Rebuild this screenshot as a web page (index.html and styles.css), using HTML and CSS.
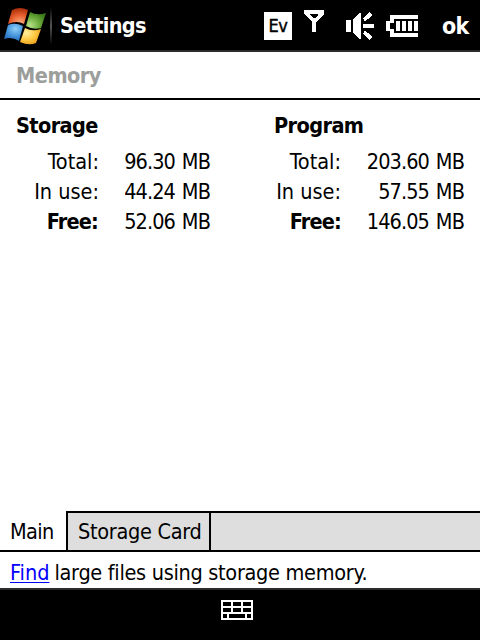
FILE: index.html
```html
<!DOCTYPE html>
<html lang="en">
<head>
    <meta charset="UTF-8">
    <meta name="viewport" content="width=device-width, initial-scale=1.0">
    <title>Settings</title>
    <link rel="stylesheet" href="styles.css">
</head>
<body>
    <header class="top-bar">
        <svg class="start-logo" width="44" height="40" viewBox="0 0 44 40">
            <defs>
                <radialGradient id="red" cx="0.6" cy="0.9" r="0.9"><stop offset="0" stop-color="#f8a878"/><stop offset="0.5" stop-color="#e86030"/><stop offset="1" stop-color="#a82c08"/></radialGradient>
                <radialGradient id="green" cx="0.2" cy="0.8" r="0.9"><stop offset="0" stop-color="#b8e088"/><stop offset="0.5" stop-color="#70b040"/><stop offset="1" stop-color="#387818"/></radialGradient>
                <radialGradient id="blue" cx="0.6" cy="0.3" r="0.9"><stop offset="0" stop-color="#90d0f8"/><stop offset="0.5" stop-color="#4090d8"/><stop offset="1" stop-color="#1858a8"/></radialGradient>
                <radialGradient id="yellow" cx="0.3" cy="0.3" r="0.9"><stop offset="0" stop-color="#fff0a0"/><stop offset="0.5" stop-color="#fcc840"/><stop offset="1" stop-color="#e08c10"/></radialGradient>
            </defs>
            <path fill="url(#red)" d="M9 3 Q17-1 25 3 L21 17 Q14 13 5 17Z"/>
            <path fill="url(#green)" d="M27 5 Q34 9 43 6 L38 21 Q30 23 23 19Z"/>
            <path fill="url(#blue)" d="M5 18 Q12 15 20 19 L16 34 Q9 29 1 32Z"/>
            <path fill="url(#yellow)" d="M22 21 Q29 25 38 22 L33 36 Q26 39 17 35Z"/>
        </svg>
        <span class="divider"></span>
        <h1>Settings</h1>
        <div class="status-icons">
            <span class="network">Ev</span>
            <svg class="signal" width="20" height="22" shape-rendering="crispEdges">
                <path fill="#fff" fill-rule="evenodd" d="M0 0H20V4L12 12V22H8V12L0 4Z M6 4V5L9 8H11L14 5V4Z"/>
            </svg>
            <svg class="speaker" width="28" height="28" shape-rendering="crispEdges">
                <path fill="#fff" d="M0 8H5V20H0Z M7 7L13 1H15V27H13L7 21Z M17 12H28V16H17Z"/>
                <path stroke="#fff" stroke-width="4" d="M18 8L25 1.500 M18 20L25 26.500"/>
            </svg>
            <svg class="battery" width="32" height="22" shape-rendering="crispEdges">
                <path fill="#fff" fill-rule="evenodd" d="M4 0H32V4H8V18H32V22H4V16H0V6H4Z M4 8V14H8V8Z"/>
                <path fill="#fff" d="M10 6h4v10h-4z M16 6h4v10h-4z M22 6h4v10h-4z M28 6h4v10h-4z"/>
            </svg>
        </div>
        <span class="ok-button">ok</span>
    </header>

    <h2 class="page-title">Memory</h2>

    <main>
        <section class="storage">
            <h3>Storage</h3>
            <dl>
                <dt>Total:</dt><dd>96.30 MB</dd>
                <dt>In use:</dt><dd>44.24 MB</dd>
                <dt class="free">Free:</dt><dd>52.06 MB</dd>
            </dl>
        </section>
        <section class="program">
            <h3>Program</h3>
            <dl>
                <dt>Total:</dt><dd>203.60 MB</dd>
                <dt>In use:</dt><dd>57.55 MB</dd>
                <dt class="free">Free:</dt><dd>146.05 MB</dd>
            </dl>
        </section>
    </main>

    <nav class="tabs">
        <div class="tab active">Main</div>
        <div class="tab card">Storage Card</div>
        <div class="tab-fill"></div>
    </nav>
    <p class="hint"><a href="#">Find</a><span>large files using storage memory.</span></p>

    <footer class="bottom-bar">
        <svg width="32" height="20" shape-rendering="crispEdges">
            <path fill="#fff" fill-rule="evenodd" d="M0 0H32V20H0Z M2 2v4h8v-4z M12 2v4h8v-4z M22 2v4h8v-4z M2 8v4h8v-4z M12 8v4h8v-4z M22 8v4h8v-4z M2 14v4h4v-4z M8 14v4h16v-4z M26 14v4h4v-4z"/>
        </svg>
    </footer>
</body>
</html>
```
FILE: styles.css
```css
* {
    box-sizing: border-box;
}

body {
    margin: 0;
    height: 640px;
    display: flex;
    flex-direction: column;
    overflow: hidden;
    background-color: #fff;
    color: #000;
    font-family: "DejaVu Sans Condensed", "DejaVu Sans", sans-serif;
    font-stretch: condensed;
    font-size: 21.5px;
    line-height: 30px;
    letter-spacing: -0.3px;
    white-space: nowrap;
}

h1, h2, h3, p, dl, dd {
    margin: 0;
    font-size: inherit;
}

/* Top bar */
.top-bar {
    display: flex;
    height: 52px;
    background-color: #000;
    border-bottom: 2px solid #2b2b2b;
    color: #fff;
    line-height: 51px;
}

.start-logo {
    margin: 7px 0 0 3px;
}

.divider {
    width: 2px;
    height: 38px;
    margin: 7px 8px 0 3px;
    background: linear-gradient(#000, #555, #000);
}

.top-bar h1 {
    width: 204px;
    letter-spacing: -0.7px;
}

.status-icons {
    display: flex;
    align-items: flex-start;
}

.network {
    width: 28px;
    height: 28px;
    margin-top: 12px;
    background-color: #fff;
    color: #000;
    font-size: 18px;
    line-height: 28px;
    text-align: center;
    -webkit-text-stroke: 0.4px #000;
}

.signal {
    margin: 10px 0 0 12px;
}

.speaker {
    margin: 12px 0 0 22px;
}

.battery {
    margin: 15px 0 0 12px;
}

.ok-button {
    margin-left: 24px;
    font-size: 23px;
    font-weight: bold;
    letter-spacing: -0.6px;
    line-height: 53px;
}

.page-title {
    height: 48px;
    padding-left: 16px;
    border-bottom: 2px solid #000;
    color: #9c9e9c;
    letter-spacing: -0.5px;
    line-height: 47px;
}

/* Memory figures */
main {
    display: flex;
    flex: 1;
    padding: 11px 16px 0;
}

.storage {
    width: 258px;
}

.storage dl {
    width: 194px;
}

.program dl {
    width: 190px;
}

h3 {
    height: 36px;
    letter-spacing: -0.6px;
}

dl {
    display: grid;
    grid-template-columns: 83px 1fr;
    text-align: right;
}

dt {
    letter-spacing: 0;
}

dd {
    letter-spacing: -0.9px;
    word-spacing: 1.6px;
}

.program dl {
    grid-template-columns: 67px 1fr;
}

.free {
    font-weight: bold;
    letter-spacing: -0.8px;
}

.storage .free {
    padding-right: 1px;
}

/* Tabs */
.tabs {
    display: flex;
    height: 41px;
    border-bottom: 2px solid #000;
    line-height: 37px;
}

.active {
    width: 66px;
    padding: 2px 0 0 10px;
    letter-spacing: -0.6px;
}

.card {
    width: 145px;
    padding-left: 10px;
    border: 2px solid #000;
    border-bottom: 0;
    background-color: #dedede;
}

.tab-fill {
    flex: 1;
    border-top: 2px solid #000;
    background-color: #dedede;
}

.hint {
    display: flex;
    gap: 5px;
    height: 36px;
    padding-left: 10px;
    line-height: 41px;
}

.hint a {
    color: #00f;
    letter-spacing: 0;
    text-decoration-thickness: 1px;
    text-underline-offset: 2px;
}

.bottom-bar {
    display: flex;
    justify-content: center;
    height: 52px;
    padding: 10px 6px 0 0;
    border-top: 2px solid #2b2b2b;
    background-color: #000;
}
```
